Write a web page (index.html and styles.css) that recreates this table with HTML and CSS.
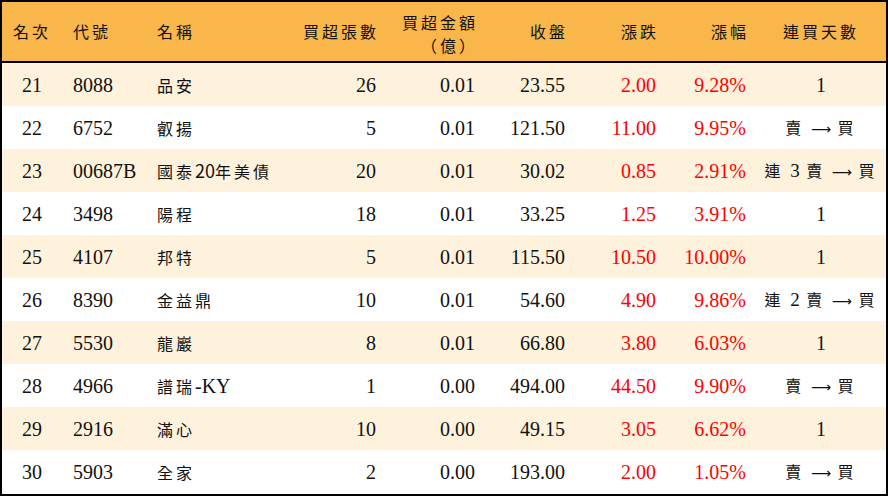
FILE: index.html
```html
<!DOCTYPE html>
<html lang="zh-Hant">
<head>
<meta charset="utf-8">
<title>買超排行</title>
<link rel="stylesheet" href="styles.css">
</head>
<body>
<div class="frame">
<table class="rank">
<colgroup>
<col class="w1"><col class="w2"><col class="w3"><col class="w4"><col class="w5"><col class="w6"><col class="w7"><col class="w8"><col class="w9">
</colgroup>
<thead>
<tr>
<th class="c"><span class="zh">名次</span></th>
<th class="l"><span class="zh">代號</span></th>
<th class="l"><span class="zh">名稱</span></th>
<th class="r"><span class="zh">買超張數</span></th>
<th class="r"><span class="zh two">買超金額<br>（億）</span></th>
<th class="r"><span class="zh">收盤</span></th>
<th class="r"><span class="zh">漲跌</span></th>
<th class="r"><span class="zh">漲幅</span></th>
<th class="c"><span class="zh">連買天數</span></th>
</tr>
</thead>
<tbody>
<tr class="alt"><td class="c">21</td><td class="l">8088</td><td class="l"><span class="zh">品安</span></td><td class="r">26</td><td class="r">0.01</td><td class="r">23.55</td><td class="r up">2.00</td><td class="r up">9.28%</td><td class="c">1</td></tr>
<tr><td class="c">22</td><td class="l">6752</td><td class="l"><span class="zh">叡揚</span></td><td class="r">5</td><td class="r">0.01</td><td class="r">121.50</td><td class="r up">11.00</td><td class="r up">9.95%</td><td class="c"><span class="zh">賣 <span class="arr">⟶</span> 買</span></td></tr>
<tr class="alt"><td class="c">23</td><td class="l">00687B</td><td class="l"><span class="zh">國泰<span class="kd">20</span>年美債</span></td><td class="r">20</td><td class="r">0.01</td><td class="r">30.02</td><td class="r up">0.85</td><td class="r up">2.91%</td><td class="c"><span class="zh">連 <span class="num">3</span> 賣 <span class="arr">⟶</span> 買</span></td></tr>
<tr><td class="c">24</td><td class="l">3498</td><td class="l"><span class="zh">陽程</span></td><td class="r">18</td><td class="r">0.01</td><td class="r">33.25</td><td class="r up">1.25</td><td class="r up">3.91%</td><td class="c">1</td></tr>
<tr class="alt"><td class="c">25</td><td class="l">4107</td><td class="l"><span class="zh">邦特</span></td><td class="r">5</td><td class="r">0.01</td><td class="r">115.50</td><td class="r up">10.50</td><td class="r up">10.00%</td><td class="c">1</td></tr>
<tr><td class="c">26</td><td class="l">8390</td><td class="l"><span class="zh">金益鼎</span></td><td class="r">10</td><td class="r">0.01</td><td class="r">54.60</td><td class="r up">4.90</td><td class="r up">9.86%</td><td class="c"><span class="zh">連 <span class="num">2</span> 賣 <span class="arr">⟶</span> 買</span></td></tr>
<tr class="alt"><td class="c">27</td><td class="l">5530</td><td class="l"><span class="zh">龍巖</span></td><td class="r">8</td><td class="r">0.01</td><td class="r">66.80</td><td class="r up">3.80</td><td class="r up">6.03%</td><td class="c">1</td></tr>
<tr><td class="c">28</td><td class="l">4966</td><td class="l"><span class="zh">譜瑞</span>-KY</td><td class="r">1</td><td class="r">0.00</td><td class="r">494.00</td><td class="r up">44.50</td><td class="r up">9.90%</td><td class="c"><span class="zh">賣 <span class="arr">⟶</span> 買</span></td></tr>
<tr class="alt"><td class="c">29</td><td class="l">2916</td><td class="l"><span class="zh">滿心</span></td><td class="r">10</td><td class="r">0.00</td><td class="r">49.15</td><td class="r up">3.05</td><td class="r up">6.62%</td><td class="c">1</td></tr>
<tr><td class="c">30</td><td class="l">5903</td><td class="l"><span class="zh">全家</span></td><td class="r">2</td><td class="r">0.00</td><td class="r">193.00</td><td class="r up">2.00</td><td class="r up">1.05%</td><td class="c"><span class="zh">賣 <span class="arr">⟶</span> 買</span></td></tr>
</tbody>
</table>
</div>
</body>
</html>
```

FILE: styles.css
```css
html, body {
  margin: 0;
  padding: 0;
  background: #ffffff;
}

.frame {
  width: 888px;
  height: 496px;
  box-sizing: border-box;
  border: 2px solid #000000;
  overflow: hidden;
}

.rank {
  width: 884px;
  border-collapse: collapse;
  table-layout: fixed;
  font-family: "Liberation Serif", "Noto Sans CJK TC", serif;
  font-size: 20px;
  color: #111111;
}

.w1 { width: 60px; }
.w2 { width: 84px; }
.w3 { width: 130px; }
.w4 { width: 110px; }
.w5 { width: 99px; }
.w6 { width: 90px; }
.w7 { width: 91px; }
.w8 { width: 90px; }
.w9 { width: 130px; }

.zh {
  font-family: "Noto Sans CJK TC", sans-serif;
  font-size: 16px;
  letter-spacing: 3px;
  font-weight: 400;
}

.zh.two {
  display: inline-block;
  line-height: 23px;
  text-align: right;
  padding-top: 4px;
  vertical-align: middle;
}

.zh .num {
  font-family: "Liberation Serif", serif;
  font-size: 19px;
  letter-spacing: 0;
}

.zh .kd {
  font-size: 18px;
  letter-spacing: 0;
}

.zh .arr {
  font-family: "DejaVu Sans", sans-serif;
  font-size: 14px;
  letter-spacing: 0;
}

.rank thead th {
  background: #f9b64a;
  height: 60px;
  padding: 0;
  font-weight: 400;
  line-height: 21px;
  border-bottom: 2px solid #000000;
  box-sizing: border-box;
  vertical-align: middle;
}

.rank thead th.r .zh {
  margin-right: -3px;
}

.rank td {
  height: 43px;
  padding: 0;
  line-height: 22px;
  vertical-align: middle;
  white-space: nowrap;
}

.rank tbody tr.alt td {
  background: #fef2dd;
}

.c { text-align: center; }
.l { text-align: left; padding-left: 11px !important; }
.r { text-align: right; padding-right: 10px !important; }

.up { color: #ff0000; }
```
